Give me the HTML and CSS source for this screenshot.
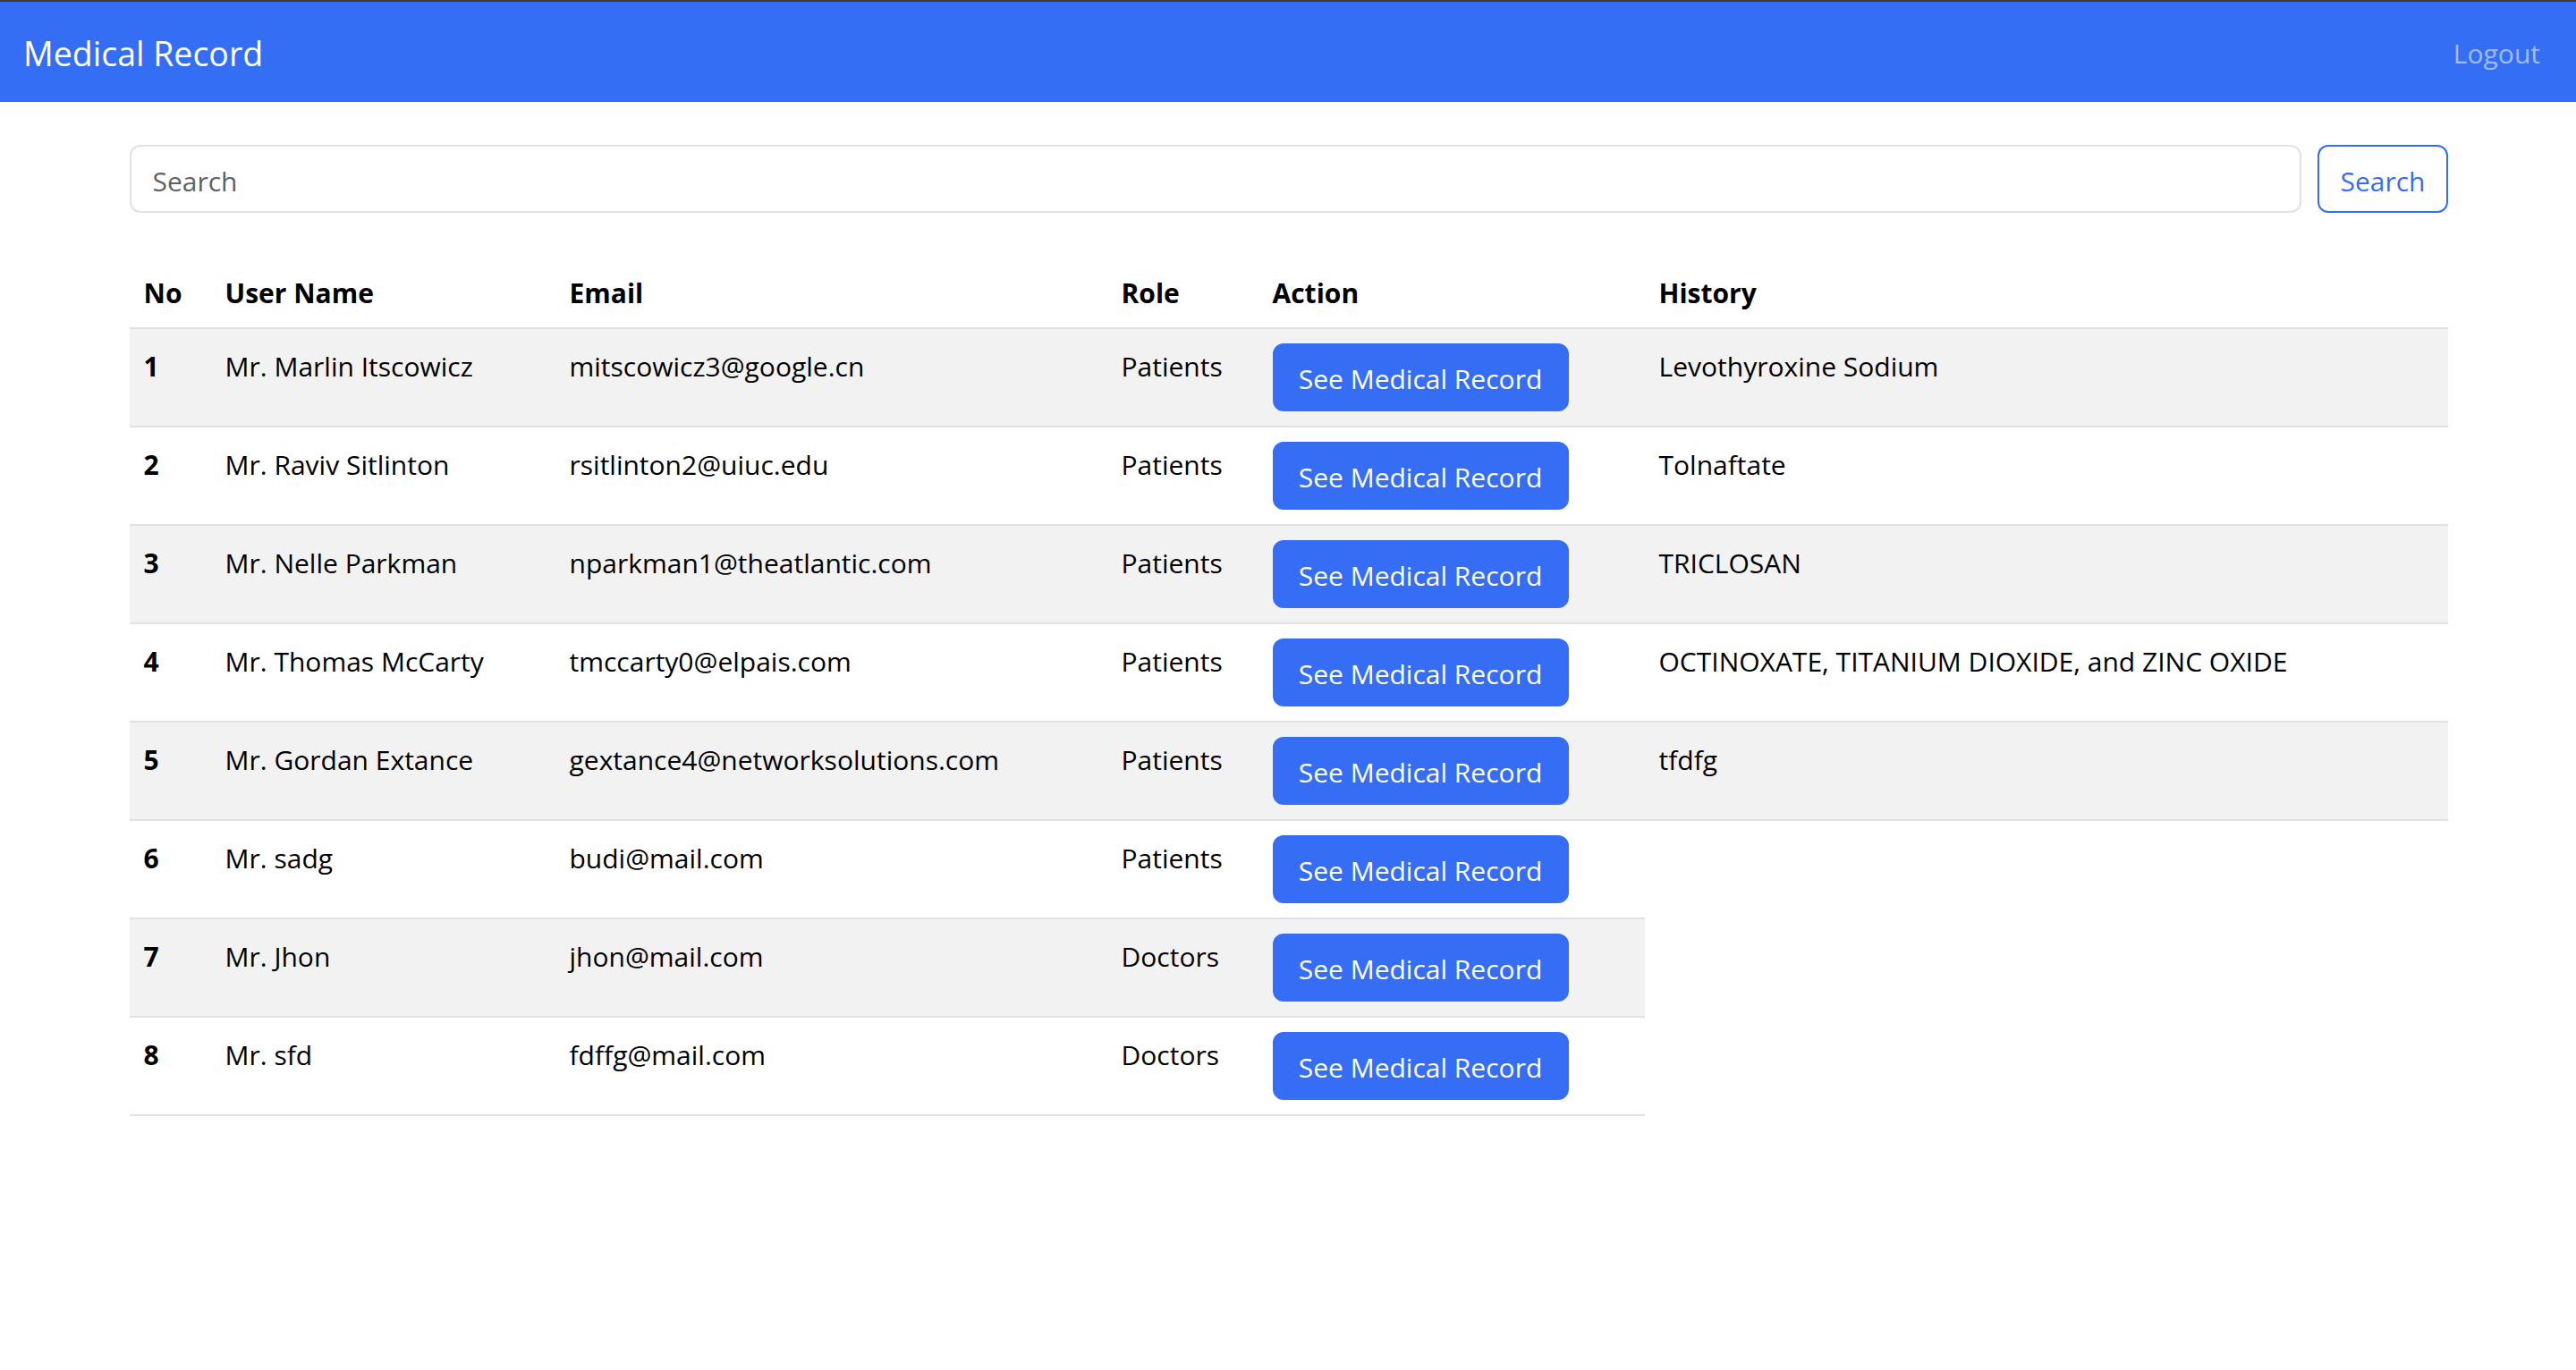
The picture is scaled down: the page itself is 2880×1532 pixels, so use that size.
FILE: index.html
```html
<!DOCTYPE html>
<html lang="en">
<head>
<meta charset="utf-8">
<title>Medical Record</title>
<link rel="stylesheet" href="styles.css">
</head>
<body>
<nav class="navbar">
  <a class="brand" href="#">Medical Record</a>
  <a class="nav-link" href="#">Logout</a>
</nav>
<main class="container">
  <form class="search-form">
    <input class="search-input" type="search" placeholder="Search">
    <button class="btn-outline" type="button">Search</button>
  </form>
  <table class="table">
    <colgroup>
      <col class="c-no"><col class="c-name"><col class="c-email"><col class="c-role"><col class="c-action"><col class="c-history">
    </colgroup>
    <thead>
      <tr><th>No</th><th>User Name</th><th>Email</th><th>Role</th><th>Action</th><th>History</th></tr>
    </thead>
    <tbody>
      <tr class="odd"><th>1</th><td>Mr. Marlin Itscowicz</td><td>mitscowicz3@google.cn</td><td>Patients</td><td class="act"><a class="btn" href="#">See Medical Record</a></td><td>Levothyroxine Sodium</td></tr>
      <tr><th>2</th><td>Mr. Raviv Sitlinton</td><td>rsitlinton2@uiuc.edu</td><td>Patients</td><td class="act"><a class="btn" href="#">See Medical Record</a></td><td>Tolnaftate</td></tr>
      <tr class="odd"><th>3</th><td>Mr. Nelle Parkman</td><td>nparkman1@theatlantic.com</td><td>Patients</td><td class="act"><a class="btn" href="#">See Medical Record</a></td><td>TRICLOSAN</td></tr>
      <tr><th>4</th><td>Mr. Thomas McCarty</td><td>tmccarty0@elpais.com</td><td>Patients</td><td class="act"><a class="btn" href="#">See Medical Record</a></td><td>OCTINOXATE, TITANIUM DIOXIDE, and ZINC OXIDE</td></tr>
      <tr class="odd"><th>5</th><td>Mr. Gordan Extance</td><td>gextance4@networksolutions.com</td><td>Patients</td><td class="act"><a class="btn" href="#">See Medical Record</a></td><td>tfdfg</td></tr>
      <tr><th>6</th><td>Mr. sadg</td><td>budi@mail.com</td><td>Patients</td><td class="act"><a class="btn" href="#">See Medical Record</a></td></tr>
      <tr class="odd"><th>7</th><td>Mr. Jhon</td><td>jhon@mail.com</td><td>Doctors</td><td class="act"><a class="btn" href="#">See Medical Record</a></td></tr>
      <tr><th>8</th><td>Mr. sfd</td><td>fdffg@mail.com</td><td>Doctors</td><td class="act"><a class="btn" href="#">See Medical Record</a></td></tr>
    </tbody>
  </table>
</main>
</body>
</html>
```
FILE: styles.css
```css
html, body {
  margin: 0;
  padding: 0;
}
body {
  font-family: "Open Sans", "Noto Sans", sans-serif;
  font-size: 30px;
  line-height: 48px;
  color: #212529;
  background: #fff;
}
.navbar {
  display: flex;
  align-items: center;
  justify-content: space-between;
  background: #346ef4;
  border-top: 2px solid #3b3b3b;
  padding: 16px 24px;
  height: 80px;
}
.brand {
  color: #fff;
  text-decoration: none;
  font-size: 37.5px;
  line-height: 60px;
  padding: 12px 0 8px;
  margin-left: 2px;
}
.nav-link {
  color: rgba(255, 255, 255, 0.55);
  text-decoration: none;
  padding: 18px 16px 14px;
}
.container {
  width: 2592px;
  margin: 0 auto;
  padding-left: 1px;
}
.search-form {
  display: flex;
  gap: 18px;
  margin-top: 48px;
}
.search-input {
  flex: 1;
  height: 76px;
  box-sizing: border-box;
  border: 2px solid #dee2e6;
  border-radius: 12px;
  padding: 14px 24px 10px;
  font-family: inherit;
  font-size: 30px;
  color: #212529;
  outline: none;
}
.search-input::placeholder {
  color: #5e6266;
}
.btn-outline {
  height: 76px;
  box-sizing: border-box;
  border: 2px solid #346ef4;
  border-radius: 12px;
  background: #fff;
  color: #346ef4;
  font-family: inherit;
  font-size: 30px;
  padding: 14px 24px 10px;
  width: 146px;
}
.table {
  width: 2592px;
  table-layout: fixed;
  border-collapse: collapse;
  margin-top: 48px;
  color: #000;
}
.c-no { width: 91px; }
.c-name { width: 385px; }
.c-email { width: 617px; }
.c-role { width: 169px; }
.c-action { width: 432px; }
.c-history { width: 898px; }
.table th,
.table td {
  padding: 18px 16px 14px;
  text-align: left;
  vertical-align: top;
  border-bottom: 2px solid #dee2e6;
  white-space: nowrap;
}
.table td.act {
  padding: 16px;
}
.table th {
  font-weight: 700;
}
.table tbody tr.odd > * {
  background: #f2f2f2;
}
.btn {
  display: inline-block;
  box-sizing: border-box;
  height: 76px;
  padding: 14px 24px 10px;
  border: 2px solid #356ef4;
  border-radius: 12px;
  background: #356ef4;
  color: #fff;
  text-decoration: none;
  font-size: 30px;
  line-height: 48px;
  width: 331px;
  text-align: center;
}
```
